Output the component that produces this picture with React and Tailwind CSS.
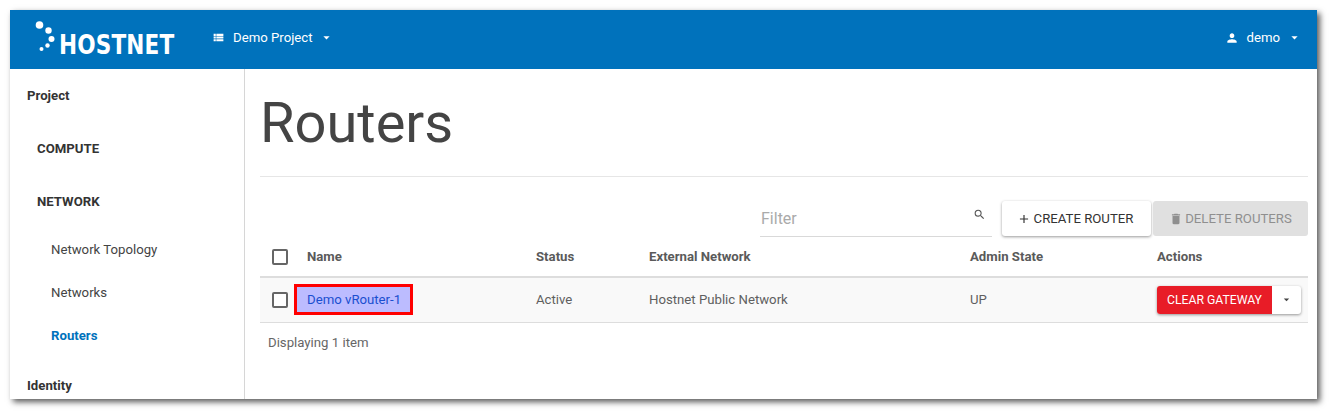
import React from "react";
import { MdViewList, MdArrowDropDown, MdPerson, MdSearch, MdAdd, MdDelete } from "react-icons/md";

function Logo() {
  return (
    <div className="flex items-end h-[59px] w-[170px] shrink-0 pl-[25px] pb-[14px]">
      <svg width="27" height="34" viewBox="0 0 27 34" className="shrink-0 mb-[1px] -mr-[3px]" aria-hidden="true">
        <circle cx="4.5" cy="5" r="3.8" fill="#fff" />
        <circle cx="13.5" cy="10.5" r="3.2" fill="#fff" />
        <circle cx="16.5" cy="19" r="3" fill="#fff" />
        <circle cx="12.5" cy="25.5" r="2.2" fill="#fff" />
        <circle cx="6.5" cy="29" r="2" fill="#fff" />
      </svg>
      <span className="text-white font-black leading-[20px] text-[27px] tracking-[0.2px] [font-family:'DejaVu_Sans',sans-serif] scale-x-[0.8] origin-left">HOSTNET</span>
    </div>
  );
}

function SideHead({ children, cls }) {
  return <div className={`font-bold text-[13.2px] leading-5 text-[#333] ${cls}`}>{children}</div>;
}

function Check() {
  return <span className="block w-[16px] h-[16px] border-2 border-[#666] rounded-[2px] bg-white" />;
}

const th = "text-left font-bold text-[13.2px] text-[#5a5a5a] px-2 align-middle";
const td = "text-left font-normal text-[13.2px] text-[#5f5f5f] px-2 align-middle";

export default function App() {
  return (
    <div className="w-[1333px] h-[415px] bg-white pt-[10px] pl-[10px] overflow-hidden [font-family:Roboto,sans-serif]">
      <div className="w-[1307px] h-[389px] bg-white flex flex-col overflow-hidden shadow-[3px_3px_6px_rgba(0,0,0,0.65)]">
        <header className="h-[59px] shrink-0 bg-[#0072bc] flex items-center text-white text-[13.2px] pr-[15px]">
          <Logo />
          <div className="flex items-center ml-[32px] -mt-[3px]">
            <MdViewList size={13} />
            <span className="ml-[8px]">Demo Project</span>
            <MdArrowDropDown size={15} className="ml-[6px]" />
          </div>
          <div className="flex items-center ml-auto -mt-[3px]">
            <MdPerson size={14} />
            <span className="ml-[7px]">demo</span>
            <MdArrowDropDown size={15} className="ml-[7px]" />
          </div>
        </header>
        <div className="flex flex-1 min-h-0">
          <aside className="w-[235px] shrink-0 border-r border-[#d6d6d6] pl-[17px] pt-[17px]">
            <SideHead>Project</SideHead>
            <SideHead cls="ml-[10px] mt-[33px]">COMPUTE</SideHead>
            <SideHead cls="ml-[10px] mt-[33px]">NETWORK</SideHead>
            <div className="ml-[24px] mt-[28px] text-[13.2px] leading-5 text-[#444]">Network Topology</div>
            <div className="ml-[24px] mt-[23px] text-[13.2px] leading-5 text-[#444]">Networks</div>
            <div className="ml-[24px] mt-[23px] text-[13.2px] leading-5 font-bold text-[#0072bc]">Routers</div>
            <SideHead cls="mt-[30px]">Identity</SideHead>
          </aside>
          <main className="flex-1 min-w-0 pl-[15px] pr-[9px]">
            <h1 className="text-[56px] leading-[66px] font-normal text-[#444] mt-[21px] pb-[20px] border-b border-[#e6e6e6]">Routers</h1>
            <div className="flex justify-end mt-[24px] h-[36px]">
              <div className="w-[232px] h-[36px] border-b border-[#d9d9d9] flex items-start justify-between pr-[6px]">
                <span className="text-[16px] leading-[35px] text-[#aaa] pl-px">Filter</span>
                <MdSearch size={13} className="text-[#555] mt-[7px]" />
              </div>
              <button className="ml-[10px] w-[149px] h-[35px] bg-white rounded-[3px] shadow-[0_1px_3px_rgba(0,0,0,0.4)] text-[13.2px] text-[#333] flex items-center justify-center pr-[3px]">
                <MdAdd size={14} className="mr-[3px]" />CREATE ROUTER
              </button>
              <button className="ml-[2px] w-[155px] h-[35px] bg-[#e0e0e0] rounded-[3px] text-[13.2px] text-[#8f8f8f] flex items-center justify-center">
                <MdDelete size={14} className="mr-[2px]" />DELETE ROUTERS
              </button>
            </div>
            <table className="w-full table-fixed border-collapse">
              <colgroup>
                <col className="w-[39px]" />
                <col className="w-[229px]" />
                <col className="w-[113px]" />
                <col className="w-[321px]" />
                <col className="w-[187px]" />
                <col className="w-[159px]" />
              </colgroup>
              <thead>
                <tr className="h-[40px] border-b-2 border-[#ddd]">
                  <th className="pl-[12px]"><Check /></th>
                  <th className={th}>Name</th>
                  <th className={th}>Status</th>
                  <th className={th}>External Network</th>
                  <th className={th}>Admin State</th>
                  <th className={th}>Actions</th>
                </tr>
              </thead>
              <tbody>
                <tr className="h-[45px] bg-[#f9f9f9] border-b border-[#ddd]">
                  <td className="pl-[12px]"><Check /></td>
                  <td className={td}>
                    <a className="inline-block -ml-[13px] border-[3px] border-[#f00] bg-[#bcbcff] text-[#1a4fd0] pl-[10px] w-[119px] leading-[25px] align-middle">Demo vRouter-1</a>
                  </td>
                  <td className={td}>Active</td>
                  <td className={td}>Hostnet Public Network</td>
                  <td className={td}>UP</td>
                  <td className={td}>
                    <div className="flex w-[144px] h-[28px] rounded-[3px] shadow-[0_1px_3px_rgba(0,0,0,0.4)] bg-white">
                      <button className="w-[115px] bg-[#e81c27] rounded-l-[3px] text-white text-[12.2px] text-center">CLEAR GATEWAY</button>
                      <span className="flex-1 flex items-center justify-center text-[#444]"><MdArrowDropDown size={13} /></span>
                    </div>
                  </td>
                </tr>
              </tbody>
            </table>
            <div className="mt-[10px] pl-[8px] text-[13.2px] leading-5 text-[#666]">Displaying 1 item</div>
          </main>
        </div>
      </div>
    </div>
  );
}
